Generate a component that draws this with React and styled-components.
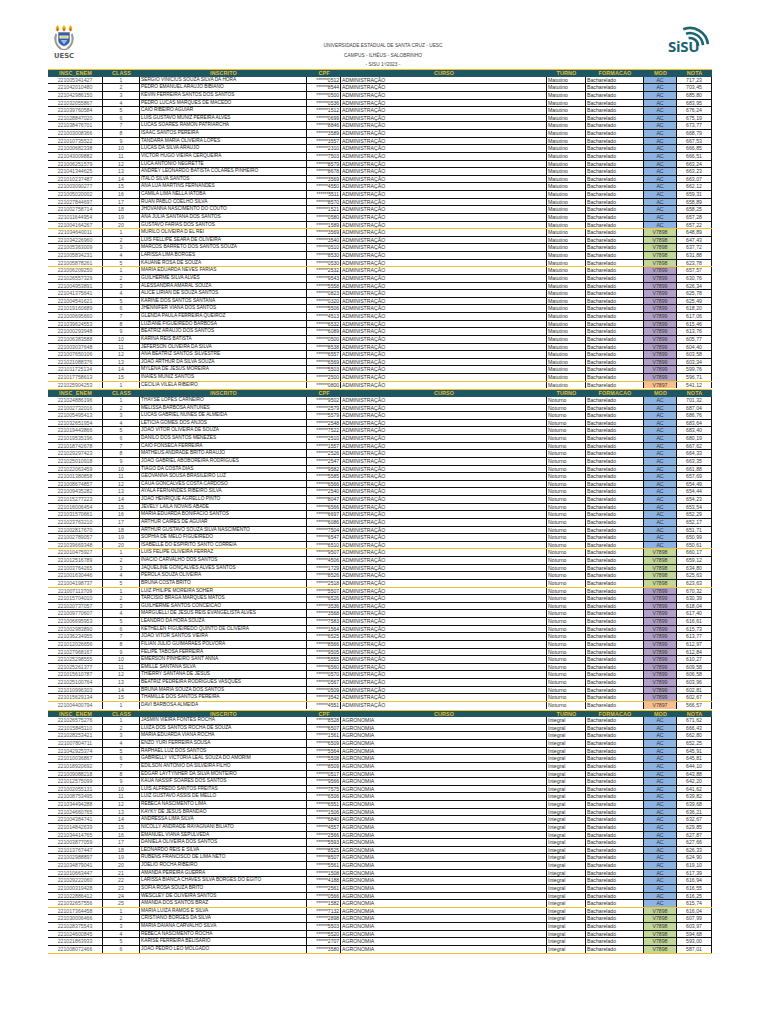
import React from 'react';
import styled, { createGlobalStyle } from 'styled-components';

const GlobalStyle = createGlobalStyle`
  html, body { margin: 0; padding: 0; background: #fff; }
  body { font-family: "Liberation Sans", Arial, sans-serif; }
  * { box-sizing: border-box; }
`;

const GOLD = '#f0c02a';
const TEAL = '#1e5662';
const COLS = '55px 37px 167px 34px 206px 39px 58px 33px 35px';
const MOD_BG = { AC: '#8db4e2', V7898: '#c4d79b', V7899: '#b1a0c7', V7897: '#fabf8f' };

const Page = styled.main`
  width: 664px;
  margin-left: 48px;
  padding-top: 25px;
`;

const Top = styled.header`
  height: 44px;
  display: grid;
  grid-template-columns: 1fr auto 1fr;
  align-items: start;
`;

const Crest = styled.div`
  justify-self: start;
  margin-left: 5px;
  width: 22px;
  display: flex;
  flex-direction: column;
  align-items: center;
`;

const CrestName = styled.span`
  font-family: "DejaVu Sans", sans-serif;
  font-weight: bold;
  font-size: 6.8px;
  line-height: 7px;
  color: #5a5a5a;
  margin-top: 3px;
`;

const Title = styled.div`
  margin-top: 16px;
  text-align: center;
  font-size: 4.8px;
  line-height: 9.5px;
  color: #3c3c3c;
  transform: translateX(3px);
`;

const Sisu = styled.div`
  justify-self: end;
  width: 48px;
  height: 28px;
  margin-top: 1px;
`;

const Table = styled.section`
  display: flex;
  flex-direction: column;
`;

const Row = styled.div`
  display: grid;
  grid-template-columns: ${COLS};
  height: 7.64px;
  border-bottom: 1px solid ${(p) => (p.$gold ? GOLD : p.$none ? 'transparent' : '#111')};
`;

const HeadRow = styled.div`
  display: grid;
  grid-template-columns: ${COLS};
  height: 7.64px;
  background: ${TEAL};
  border-top: 1px solid ${GOLD};
`;

const HeadCell = styled.div`
  color: #e6be2a;
  font-weight: bold;
  font-size: 5.4px;
  line-height: 6.6px;
  text-align: center;
  letter-spacing: 0.15px;
  white-space: nowrap;
  overflow: hidden;
`;

const Cell = styled.div`
  border-right: 1px solid #111;
  font-size: 5.2px;
  line-height: 6.6px;
  white-space: nowrap;
  overflow: hidden;
  color: #303030;
  padding: 0 1px;
  text-align: left;
`;

const InscCell = styled(Cell)`
  text-align: center;
  color: #5c5c5c;
`;

const ClassCell = styled(Cell)`
  text-align: center;
  color: #555;
`;

const NameCell = styled(Cell)`
  font-size: 4.8px;
  color: #262626;
`;

const CpfCell = styled(Cell)`
  text-align: right;
  font-size: 5px;
  color: #333;
`;

const ModCell = styled(Cell)`
  text-align: center;
  background: ${(p) => p.$bg};
  color: #3a3a3a;
`;

const NotaCell = styled(Cell)`
  text-align: center;
  color: #404040;
`;

const parse = (t) =>
  t
    .trim()
    .split('\n')
    .map((l) => l.trim().split('|'));

const SECTIONS = [
  {
    turno: 'Matutino',
    curso: 'ADMINISTRAÇÃO',
    groups: [
      {
        mod: 'AC',
        rows: parse(`
221005341427|SERGIO VINICIUS SOUZA SILVA DA HORA|0512|717,23
221042010480|PEDRO EMANUEL ARAUJO BIBIANO|8544|703,45
221042986150|KEVIN FERREIRA SANTOS DOS SANTOS|0500|685,80
221032055867|PEDRO LUCAS MARQUES DE MACEDO|0536|683,95
221039760584|CAIO RIBEIRO AGUIAR|1512|676,24
221028847020|LUIS GUSTAVO MUNIZ PEREIRA ALVES|0699|675,19
221038476701|LUCAS SOARES RAMON PATRIARCHA|8846|673,77
221003008366|ISAAC SANTOS PEREIRA|3589|668,79
221010735522|TANDARA MARIA OLIVEIRA LOPES|3557|667,53
221000682338|LUCAS DA SILVA ARAUJO|2310|666,85
221043009882|VICTOR HUGO VIEIRA CERQUEIRA|7503|666,51
221006251579|LUCA ANTONIO NEGRETTE|8579|663,24
221041344625|ANDREY LEONARDO BATISTA COLARES PINHEIRO|8678|663,23
221010237487|ITALO SILVA SANTOS|3569|663,07
221003090277|ANA LUA MARTINS FERNANDES|4550|662,12
221005020002|CAMILA LIMA NELLA IATOBA|5511|659,31
221027844697|RUAN PABLO COELHO SILVA|8570|658,89
221002758714|JHOVANNA NASCIMENTO DO COUTO|1521|658,25
221011644954|ANA JULIA SANTANA DOS SANTOS|0580|657,28
221004164267|GUSTAVO FARIAS DOS SANTOS|1589|657,22`),
      },
      {
        mod: 'V7898',
        rows: parse(`
221034640011|MURILO OLIVEIRA D EL REI|3569|648,89
221034226960|LUIS FELLIPE SEARA DE OLIVEIRA|3540|647,43
221005363009|MARCOS BARRETO DOS SANTOS SOUZA|0510|637,72
221005834231|LARISSA LIMA BORGES|8530|631,88
221005878261|KAUANE ROSA DE SOUZA|0530|623,78`),
      },
      {
        mod: 'V7899',
        rows: parse(`
221006209250|MARIA EDUARDA NEVES FARIAS|2532|657,57
221026557329|GUILHERME SILVA ALVES|9543|630,76
221004953891|ALESSANDRA AMARAL SOUZA|5558|626,34
221041375641|ALICE LIRIAN DE SOUZA SANTOS|0823|625,78
221004541621|KARINE DOS SANTOS SANTANA|0320|625,49
221019160689|JHENNIFER VIANA DOS SANTOS|5506|618,20
221000695660|GLENDA PAULA FERREIRA QUEIROZ|4513|617,06
221039624553|LUZIANE FIGUEIREDO BARBOSA|6532|615,46
221000293948|BEATRIZ ARAUJO DOS SANTOS|6089|613,76
221006383588|KARINA REIS BATISTA|0500|605,77
221003037648|JEFERSON OLIVEIRA DA SILVA|8538|604,40
221007650106|ANA BEATRIZ SANTOS SILVESTRE|6557|603,58
221021088376|JOAO ARTHUR DA SILVA SOUZA|6569|603,34
221011725134|MYLENA DE JESUS MOREIRA|5503|599,76
221017758613|INAIES MUNIZ SANTOS|2500|596,71`),
      },
      {
        mod: 'V7897',
        rows: parse(`221025904253|CECILIA VILELA RIBEIRO|0800|541,12`),
      },
    ],
  },
  {
    turno: 'Noturno',
    curso: 'ADMINISTRAÇÃO',
    groups: [
      {
        mod: 'AC',
        rows: parse(`
221024886196|THAYSE LOPES CARNEIRO|9502|701,32
221002732016|MELISSA BARBOSA ANTUNES|2579|687,04
221005495413|LUCAS GABRIEL NUNES DE ALMEIDA|5579|686,76
221032651954|LETICIA GOMES DOS ANJOS|2548|683,64
221019443866|JOAO VITOR OLIVEIRA DE SOUZA|7522|683,40
221019535196|DANILO DOS SANTOS MENEZES|2510|680,19
221018742678|CAIO FONSECA FERREIRA|1557|667,62
221029297423|MATHEUS ANDRADE BRITO ARAUJO|2526|664,33
221025010918|JOAO GABRIEL ABOBOREIRA RODRIGUES|2547|663,35
221022063459|TIAGO DA COSTA DIAS|9582|661,88
221001380858|GEOVANNA SOUSA BRASILEIRO LUZ|5585|657,69
221008674857|CAUA GONCALVES COSTA CARDOSO|6566|654,49
221009435282|AYALA FERNANDES RIBEIRO SILVA|2540|654,44
221015277223|JOAO HENRIQUE AGRELLO PINTO|8047|654,23
221016006454|JEVELY LAILA NOVAIS ABADE|6566|653,54
221031570661|MARIA EDUARDA BONIFACIO SANTOS|6697|652,29
221023763210|ARTHUR CAIRES DE AGUIAR|6086|652,17
221002817670|ARTHUR GUSTAVO SOUZA SILVA NASCIMENTO|7504|651,71
221002789057|SOPHIA DE MELO FIGUEIREDO|6547|650,99
221039669348|ISABELLE DO ESPIRITO SANTO CORREIA|6510|650,61`),
      },
      {
        mod: 'V7898',
        rows: parse(`
221010475927|LUIS FELIPE OLIVEIRA FERRAZ|9507|660,17
221012516789|INACIO CARVALHO DOS SANTOS|4506|659,12
221003764265|JAQUELINE GONÇALVES ALVES SANTOS|1729|634,80
221001630446|PEROLA SOUZA OLIVEIRA|8526|625,63
221004198737|BRUNA COSTA BRITO|2518|623,63`),
      },
      {
        mod: 'V7899',
        rows: parse(`
221007113709|LUIZ PHILIPE MOREIRA SOHER|5507|670,32
221015704010|TARCISIO BRAGA MARQUES MATOS|6526|630,39
221020737057|GUILHERME SANTOS CONCEICAO|3536|618,04
221009770607|MARGUELLI DE JESUS REIS EVANGELISTA ALVES|3568|617,40
221006695953|LEANDRO DA HORA SOUZA|7583|616,61
221002983890|KETHELEN FIGUEIREDO QUINTO DE OLIVEIRA|1564|615,73
221036234955|JOAO VITOR SANTOS VIEIRA|6525|613,77
221012026656|FILIAN JULIO GUIMARAES POLVORA|8566|612,97
221027968167|FELIPE TABOSA FERREIRA|9505|612,84
221025298555|EMERSON PINHEIRO SANT ANNA|5555|610,27
221025261377|EMILLE SANTANA SILVA|6560|609,58
221015610787|THIERRY SANTANA DE JESUS|0570|606,58
221025100764|BEATRIZ PEDREIRA RODRIGUES VASQUES|0567|603,96
221010996303|BRUNA MARIA SOUZA DOS SANTOS|0509|602,81
221015629134|THAMILLE DOS SANTOS PEREIRA|3542|602,67`),
      },
      {
        mod: 'V7897',
        rows: parse(`221004400794|DAVI BARBOSA ALMEIDA|4551|566,57`),
      },
    ],
  },
  {
    turno: 'Integral',
    curso: 'AGRONOMIA',
    groups: [
      {
        mod: 'AC',
        rows: parse(`
221026575276|JASMIN VIEIRA FONTES ROCHA|8528|671,62
221015845110|LUIZA DOS SANTOS ROCHA DE SOUZA|6507|666,43
221028253421|MARIA EDUARDA VIANA ROCHA|1561|662,80
221007804711|ENZO YURI FERREIRA SOUSA|6509|652,25
221042925374|RAPHAEL LUZ DOS SANTOS|5564|645,91
221010036867|GABRIELLY VICTORIA LEAL SOUZA DO AMORIM|5508|645,81
221018920692|EDILSON ANTONIO DA SILVEIRA FILHO|8509|644,10
221009088218|EDGAR LAYTYNHER DA SILVA MONTEIRO|0517|643,88
221012575099|KAUA NASSIF SOARES DOS SANTOS|9566|642,20
221002055131|LUIS ALFREDO SANTOS FREITAS|7575|641,62
221008753495|LUIZ GUSTAVO ASSIS DE MELLO|6506|639,82
221034494288|REBECA NASCIMENTO LIMA|6551|639,68
221024660765|KAYKY DE JESUS BRANDAO|1506|636,21
221004384741|ANDRESSA LIMA SILVA|6840|632,67
221014842639|NICOLLY ANDRADE RAYAGNANI BILIATO|4557|629,85
221034414765|EMANUEL VIANA SEPULVEDA|2566|627,87
221003877059|DANIELA OLIVEIRA DOS SANTOS|5593|627,66
221013767447|LEONARDO REIS E SILVA|8525|626,33
221002988897|RUBENS FRANCISCO DE LIMA NETO|8507|624,90
221034879041|JOELIO ROCHA RIBEIRO|5561|619,10
221010663447|AMANDA PEREIRA GUERRA|1508|617,39
221029222060|LARISSA BIANCA CHAVES SILVA BORGES DO EGITO|4188|616,94
221000319428|SOFIA ROSA SOUZA BRITO|2561|616,55
221022886412|WESCLEY DE OLIVEIRA SANTOS|0566|616,25
221032657556|AMANDA DOS SANTOS BRAZ|1582|615,74`),
      },
      {
        mod: 'V7898',
        rows: parse(`
221017364458|MARIA LUIZA RAMOS E SILVA|7132|616,04
221030006466|CRISTIANO BORGES DA SILVA|2898|607,99
221028375543|MARIA DAIANA CARVALHO SILVA|5503|603,97
221024600845|REBECA NASCIMENTO ROCHA|5520|594,68
221021863933|KARISE FERREIRA BELISARIO|2707|593,00
221008072466|JOAO PEDRO LEO MOLGADO|3580|587,01`),
      },
    ],
  },
];

const HEADS = ['INSC_ENEM', 'CLASS', 'INSCRITO', 'CPF', 'CURSO', 'TURNO', 'FORMACAO', 'MOD', 'NOTA'];

function UescCrest() {
  return (
    <Crest>
      <svg width="22" height="25" viewBox="0 0 22 25">
        {[4.5, 11, 17.5].map((x) => (
          <g key={x}>
            <path d={`M${x} 0.3 C${x + 2.5} 2.6 ${x + 2.3} 5 ${x} 6.6 C${x - 2.3} 5 ${x - 2.5} 2.6 ${x} 0.3Z`} fill="#f2b21b" />
            <path d={`M${x} 2.8 C${x + 1.3} 4.1 ${x + 1.2} 5.5 ${x} 6.4 C${x - 1.2} 5.5 ${x - 1.3} 4.1 ${x} 2.8Z`} fill="#d9541e" />
          </g>
        ))}
        <path d="M3.2 9 C1.4 13.5 2.2 19.5 8 24" fill="none" stroke="#9a9a9a" strokeWidth="2.2" />
        <path d="M18.8 9 C20.6 13.5 19.8 19.5 14 24" fill="none" stroke="#9a9a9a" strokeWidth="2.2" />
        <path d="M5.5 7.5 H16.5 V15.5 C16.5 18.5 13.8 20 11 21 C8.2 20 5.5 18.5 5.5 15.5Z" fill="#2d5fae" stroke="#6b6b6b" strokeWidth="0.5" />
        <rect x="6.5" y="10.5" width="9" height="3" fill="#e9eef7" />
        <rect x="8" y="11.3" width="6" height="1.4" fill="#f2c12e" />
        <path d="M7.5 15 H14.5 L11 19.5Z" fill="#8fc0e8" />
        <path d="M8 24 Q11 25 14 24" fill="none" stroke="#8a8a8a" strokeWidth="1.2" />
      </svg>
      <CrestName>UESC</CrestName>
    </Crest>
  );
}

function SisuLogo() {
  const cx = 26;
  const cy = 20;
  const arc = (r, a0, a1) => {
    const rad = (a) => (a * Math.PI) / 180;
    const x0 = cx + r * Math.cos(rad(a0));
    const y0 = cy + r * Math.sin(rad(a0));
    const x1 = cx + r * Math.cos(rad(a1));
    const y1 = cy + r * Math.sin(rad(a1));
    return `M${x0.toFixed(2)} ${y0.toFixed(2)} A${r} ${r} 0 0 1 ${x1.toFixed(2)} ${y1.toFixed(2)}`;
  };
  return (
    <Sisu>
      <svg width="48" height="28" viewBox="0 0 48 28" overflow="visible">
        <path d={arc(18, -112, -6)} fill="none" stroke="#1b6470" strokeWidth="2.6" />
        <path d={arc(13, -108, -4)} fill="none" stroke="#1b6470" strokeWidth="2.6" />
        <path d={arc(8, -100, 0)} fill="none" stroke="#1b6470" strokeWidth="2.6" />
        <text x="4" y="26" fill="#1b6470" fontFamily="'Open Sans', 'DejaVu Sans', sans-serif" fontWeight="bold" fontSize="15" letterSpacing="-0.3">
          SiSU
        </text>
      </svg>
    </Sisu>
  );
}

function Section({ section, last }) {
  return (
    <>
      <HeadRow>
        {HEADS.map((h) => (
          <HeadCell key={h}>{h}</HeadCell>
        ))}
      </HeadRow>
      {section.groups.map((g, gi) =>
        g.rows.map((r, ri) => {
          const endOfGroup = ri === g.rows.length - 1;
          const lastGroup = gi === section.groups.length - 1;
          const gold = endOfGroup && (!lastGroup || last);
          const none = endOfGroup && lastGroup && !last;
          return (
            <Row key={r[0]} $gold={gold} $none={none}>
              <InscCell>{r[0]}</InscCell>
              <ClassCell>{ri + 1}</ClassCell>
              <NameCell>{r[1]}</NameCell>
              <CpfCell>{'******' + r[2]}</CpfCell>
              <Cell>{section.curso}</Cell>
              <Cell>{section.turno}</Cell>
              <Cell>Bacharelado</Cell>
              <ModCell $bg={MOD_BG[g.mod]}>{g.mod}</ModCell>
              <NotaCell>{r[3]}</NotaCell>
            </Row>
          );
        })
      )}
    </>
  );
}

export default function App() {
  return (
    <>
      <GlobalStyle />
      <Page>
        <Top>
          <UescCrest />
          <Title>
            <div>UNIVERSIDADE ESTADUAL DE SANTA CRUZ - UESC</div>
            <div>CAMPUS - ILHÉUS - SALOBRINHO</div>
            <div>- SISU 1º/2023 -</div>
          </Title>
          <SisuLogo />
        </Top>
        <Table>
          {SECTIONS.map((s, i) => (
            <Section key={i} section={s} last={i === SECTIONS.length - 1} />
          ))}
        </Table>
      </Page>
    </>
  );
}
